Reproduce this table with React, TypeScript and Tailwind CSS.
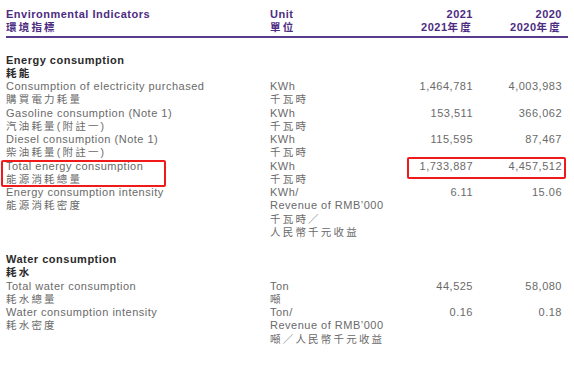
import React from "react";

type Row = {
  en: string;
  zh: string;
  unit: string[];
  y2021: string;
  y2020: string;
  mark?: boolean;
};

const energy: Row[] = [
  { en: "Consumption of electricity purchased", zh: "購買電力耗量", unit: ["KWh", "千瓦時"], y2021: "1,464,781", y2020: "4,003,983" },
  { en: "Gasoline consumption (Note 1)", zh: "汽油耗量(附註一)", unit: ["KWh", "千瓦時"], y2021: "153,511", y2020: "366,062" },
  { en: "Diesel consumption (Note 1)", zh: "柴油耗量(附註一)", unit: ["KWh", "千瓦時"], y2021: "115,595", y2020: "87,467" },
  { en: "Total energy consumption", zh: "能源消耗總量", unit: ["KWh", "千瓦時"], y2021: "1,733,887", y2020: "4,457,512", mark: true },
  { en: "Energy consumption intensity", zh: "能源消耗密度", unit: ["KWh/", "Revenue of RMB’000", "千瓦時／", "人民幣千元收益"], y2021: "6.11", y2020: "15.06" },
];

const water: Row[] = [
  { en: "Total water consumption", zh: "耗水總量", unit: ["Ton", "噸"], y2021: "44,525", y2020: "58,080" },
  { en: "Water consumption intensity", zh: "耗水密度", unit: ["Ton/", "Revenue of RMB’000", "噸／人民幣千元收益"], y2021: "0.16", y2020: "0.18" },
];

const grid = "grid grid-cols-[264px_120px_83px_89px]";
const isZh = (s: string) => /[\u3000-\u9fff\uff00-\uffef]/.test(s);

function Line({ text }: { text: string }) {
  return (
    <div className={isZh(text) ? "text-[10.5px] tracking-[2.2px]" : "tracking-[0.5px]"}>{text}</div>
  );
}

function DataRow({ row }: { row: Row }) {
  return (
    <div className={`${grid} relative`}>
      <div>
        <Line text={row.en} />
        <Line text={row.zh} />
      </div>
      <div>
        {row.unit.map((u) => (
          <Line key={u} text={u} />
        ))}
      </div>
      <div className="text-right tracking-[0.5px]">{row.y2021}</div>
      <div className="text-right tracking-[0.5px]">{row.y2020}</div>
      {row.mark && (
        <>
          <div className="absolute left-[-5px] top-0 h-[27px] w-[165px] rounded-[2px] border-2 border-[#f11a1a]" />
          <div className="absolute left-[401px] top-[-3px] h-[22px] w-[159px] rounded-[2px] border-2 border-[#f11a1a]" />
        </>
      )}
    </div>
  );
}

function Section({ en, zh, rows }: { en: string; zh: string; rows: Row[] }) {
  return (
    <div>
      <div className="font-bold text-[#2a2a2a]">
        <div className="tracking-[0.5px]">{en}</div>
        <div className="text-[10.5px] tracking-[2.2px]">{zh}</div>
      </div>
      {rows.map((r) => (
        <DataRow key={r.en} row={r} />
      ))}
    </div>
  );
}

export default function App() {
  return (
    <div
      className="h-[365px] w-[574px] overflow-hidden bg-white px-[6px] pt-[8px] text-[11px] leading-[13.25px] text-[#6a6a6a]"
      style={{ fontFamily: '"Liberation Sans", "Noto Sans CJK TC", sans-serif' }}
    >
      {/* table header */}
      <div className={`${grid} border-b-2 border-[#5a3a8c] pb-[1px] font-bold text-[#4d2c82]`}>
        <div>
          <div className="tracking-[0.5px]">Environmental Indicators</div>
          <div className="text-[10.5px] tracking-[2.2px]">環境指標</div>
        </div>
        <div>
          <div className="tracking-[0.5px]">Unit</div>
          <div className="text-[10.5px] tracking-[2.2px]">單位</div>
        </div>
        <div className="text-right">
          <div className="tracking-[0.5px]">2021</div>
          <div className="tracking-[0.5px]">
            2021<span className="text-[10.5px] tracking-[2.2px]">年度</span>
          </div>
        </div>
        <div className="text-right">
          <div className="tracking-[0.5px]">2020</div>
          <div className="tracking-[0.5px]">
            2020<span className="text-[10.5px] tracking-[2.2px]">年度</span>
          </div>
        </div>
      </div>

      <div className="mt-[16px]">
        <Section en="Energy consumption" zh="耗能" rows={energy} />
      </div>
      <div className="mt-[14px]">
        <Section en="Water consumption" zh="耗水" rows={water} />
      </div>
    </div>
  );
}
